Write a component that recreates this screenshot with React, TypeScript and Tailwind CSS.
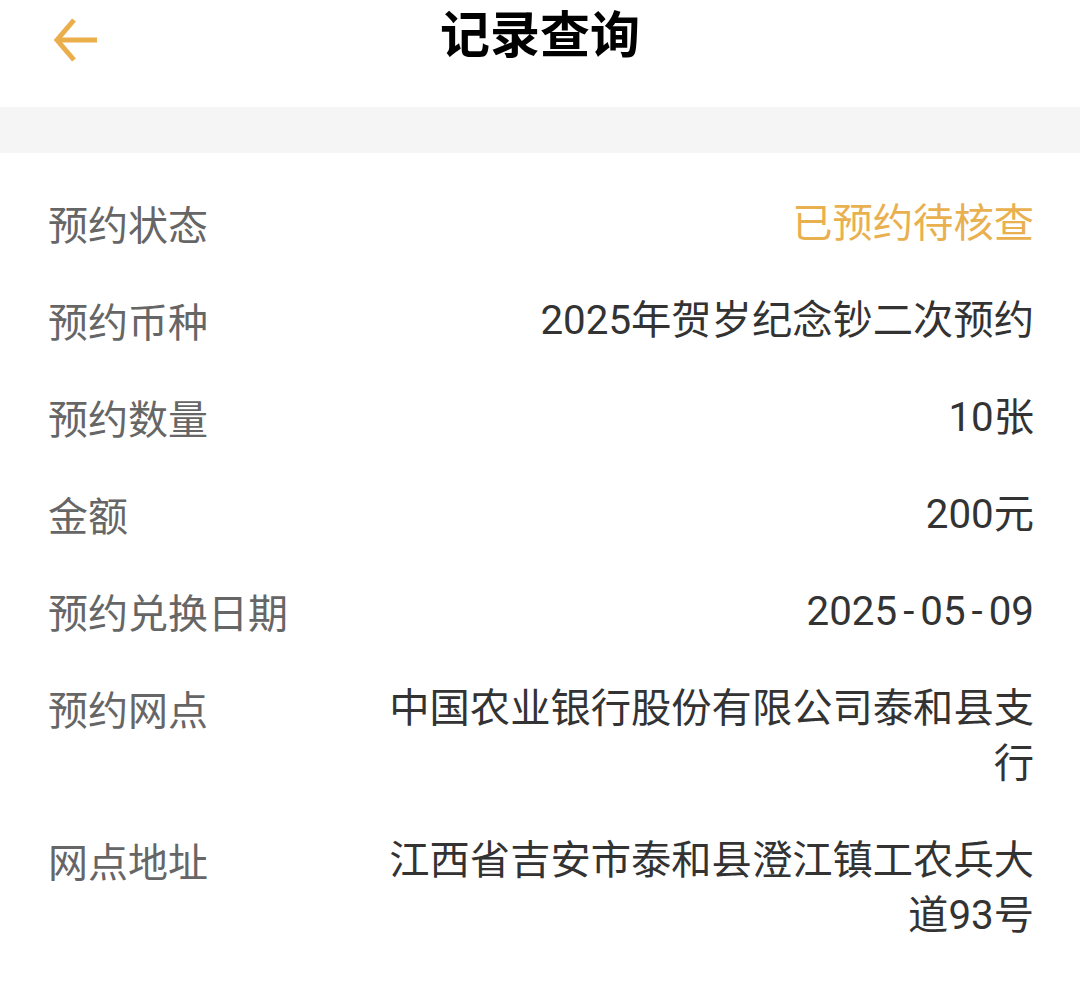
import React from "react";

const rows: { label: string; value: string; accent?: boolean }[] = [
  { label: "预约状态", value: "已预约待核查", accent: true },
  { label: "预约币种", value: "2025年贺岁纪念钞二次预约" },
  { label: "预约数量", value: "10张" },
  { label: "金额", value: "200元" },
  { label: "预约兑换日期", value: "2025-05-09" },
  { label: "预约网点", value: "中国农业银行股份有限公司泰和县支行" },
  { label: "网点地址", value: "江西省吉安市泰和县澄江镇工农兵大道93号" },
];

function Value({ text }: { text: string }) {
  const parts = text.split("-");
  return (
    <>
      {parts.map((p, i) => (
        <React.Fragment key={i}>
          {i > 0 && <span className="mx-[6px]">-</span>}
          {p}
        </React.Fragment>
      ))}
    </>
  );
}

export default function App() {
  return (
    <div
      className="w-[1080px] h-[991px] bg-white overflow-hidden"
      style={{ fontFamily: '"Noto Sans CJK SC", "Noto Sans", sans-serif' }}
    >
      <div className="relative h-[107px] flex flex-col items-center pt-[0px]">
        <svg
          className="absolute left-[50px] top-[16px]"
          width="52"
          height="48"
          viewBox="0 0 52 48"
          fill="none"
          stroke="#eaae4b"
          strokeWidth="5"
          strokeLinecap="butt"
          strokeLinejoin="miter"
        >
          <path d="M24 4 L7 24 L24 44" />
          <path d="M7 24 H47" />
        </svg>
        <div className="h-[70px] flex items-center">
          <div className="text-[50px] font-bold leading-[70px] -translate-y-[4px] text-black">记录查询</div>
        </div>
      </div>
      <div className="h-[46px] bg-[#f5f5f5]" />
      <div className="pt-[22px] pl-[48px] pr-[46px]">
        {rows.map((r) => (
          <div key={r.label} className="flex justify-between items-start py-[21px]">
            <div className="text-[40px] leading-[55px] text-[#666666] whitespace-nowrap">{r.label}</div>
            <div
              className={`max-w-[652px] text-right text-[40.3px] leading-[55px] ${
                r.accent ? "text-[#e9b04f]" : "text-[#333333]"
              }`}
              style={{ fontFamily: 'Roboto, "Noto Sans CJK SC", sans-serif' }}
            >
              <Value text={r.value} />
            </div>
          </div>
        ))}
      </div>
    </div>
  );
}
